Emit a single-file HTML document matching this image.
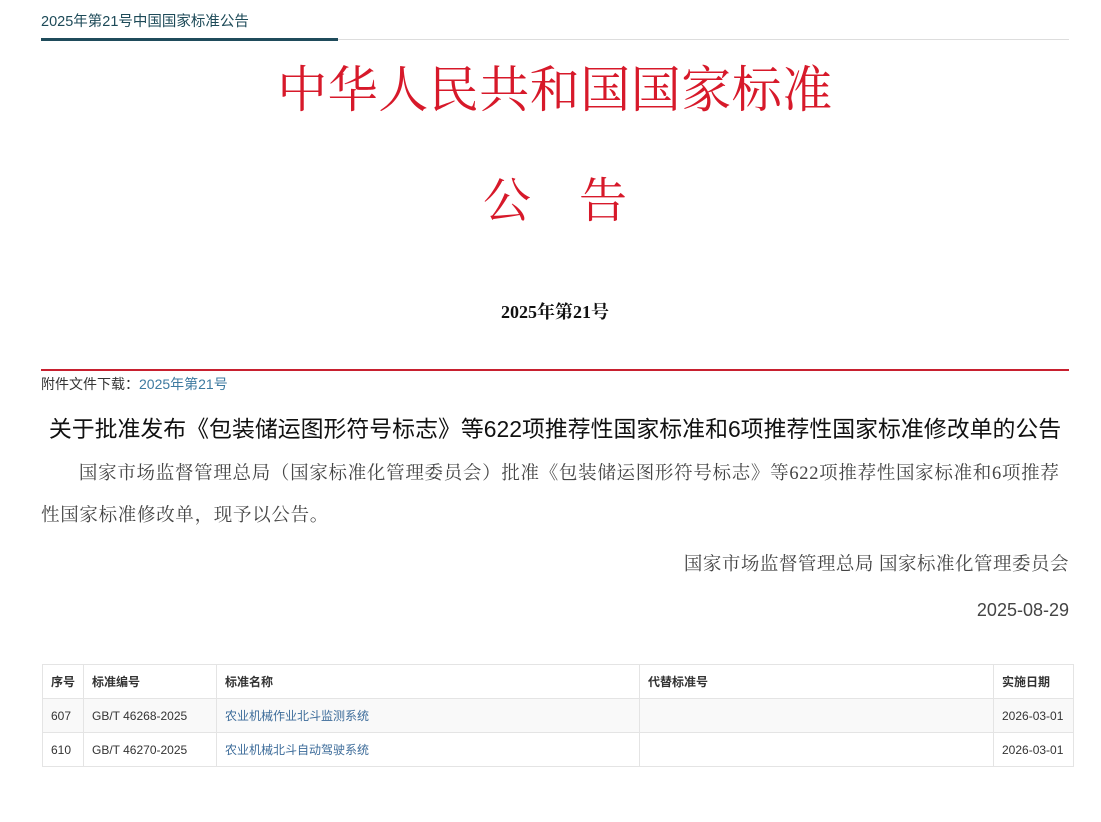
<!DOCTYPE html>
<html><head><meta charset="utf-8"><style>
body{margin:0;background:#fff;font-family:"Liberation Sans","Noto Sans CJK SC",sans-serif;}
.w{position:absolute;left:41px;width:1028px;}
.serif{font-family:"Liberation Serif","Noto Serif CJK SC",serif;}
table{position:absolute;left:42px;top:664px;width:1032px;border-collapse:collapse;font-size:12px;color:#333;}
td,th{border:1px solid #e4e4e4;height:33px;padding:0 8px;text-align:left;}
th{font-weight:bold;}
tbody tr:nth-child(odd){background:#f9f9f9;}
a{color:#3d6c9a;text-decoration:none;}
</style></head><body>
<div class="w" style="top:10px;font-size:14.5px;color:#1d4a58;">2025年第21号中国国家标准公告</div>
<div class="w" style="top:39px;height:1px;background:#ddd;"></div>
<div style="position:absolute;left:41px;top:38px;width:297px;height:3px;background:#1f4b5b;"></div>
<div class="w serif" style="top:58px;text-align:center;font-size:50px;color:#d7192a;line-height:64px;letter-spacing:0.5px;">中华人民共和国国家标准</div>
<div class="w serif" style="top:172px;text-align:center;font-size:48px;color:#d7192a;line-height:60px;">公&nbsp;&nbsp;&nbsp;&nbsp;告</div>
<div class="w serif" style="top:298px;text-align:center;font-size:18px;font-weight:bold;color:#111;">2025年第21号</div>
<div class="w" style="top:369px;height:2px;background:#c8202f;"></div>
<div class="w" style="top:374px;font-size:14px;color:#333;">附件文件下载：<span style="color:#3d7aa0">2025年第21号</span></div>
<div class="w" style="top:410px;left:30px;width:1050px;text-align:center;font-size:22.9px;color:#111;white-space:nowrap;">关于批准发布《包装储运图形符号标志》等622项推荐性国家标准和6项推荐性国家标准修改单的公告</div>
<div class="w serif" style="top:453px;font-size:18.5px;line-height:42px;color:#444;text-indent:2.05em;letter-spacing:0.7px;">国家市场监督管理总局（国家标准化管理委员会）批准《包装储运图形符号标志》等622项推荐性国家标准和6项推荐性国家标准修改单，现予以公告。</div>
<div class="w serif" style="top:550px;text-align:right;font-size:18.5px;color:#444;letter-spacing:0.5px;">国家市场监督管理总局 国家标准化管理委员会</div>
<div class="w" style="top:600px;text-align:right;font-size:18px;color:#444;">2025-08-29</div>
<table>
<thead><tr><th style="width:24px">序号</th><th style="width:116px">标准编号</th><th style="width:406px">标准名称</th><th style="width:337px">代替标准号</th><th>实施日期</th></tr></thead>
<tbody>
<tr><td>607</td><td>GB/T 46268-2025</td><td><a>农业机械作业北斗监测系统</a></td><td></td><td>2026-03-01</td></tr>
<tr style="background:#fff"><td>610</td><td>GB/T 46270-2025</td><td><a>农业机械北斗自动驾驶系统</a></td><td></td><td>2026-03-01</td></tr>
</tbody></table>
</body></html>
